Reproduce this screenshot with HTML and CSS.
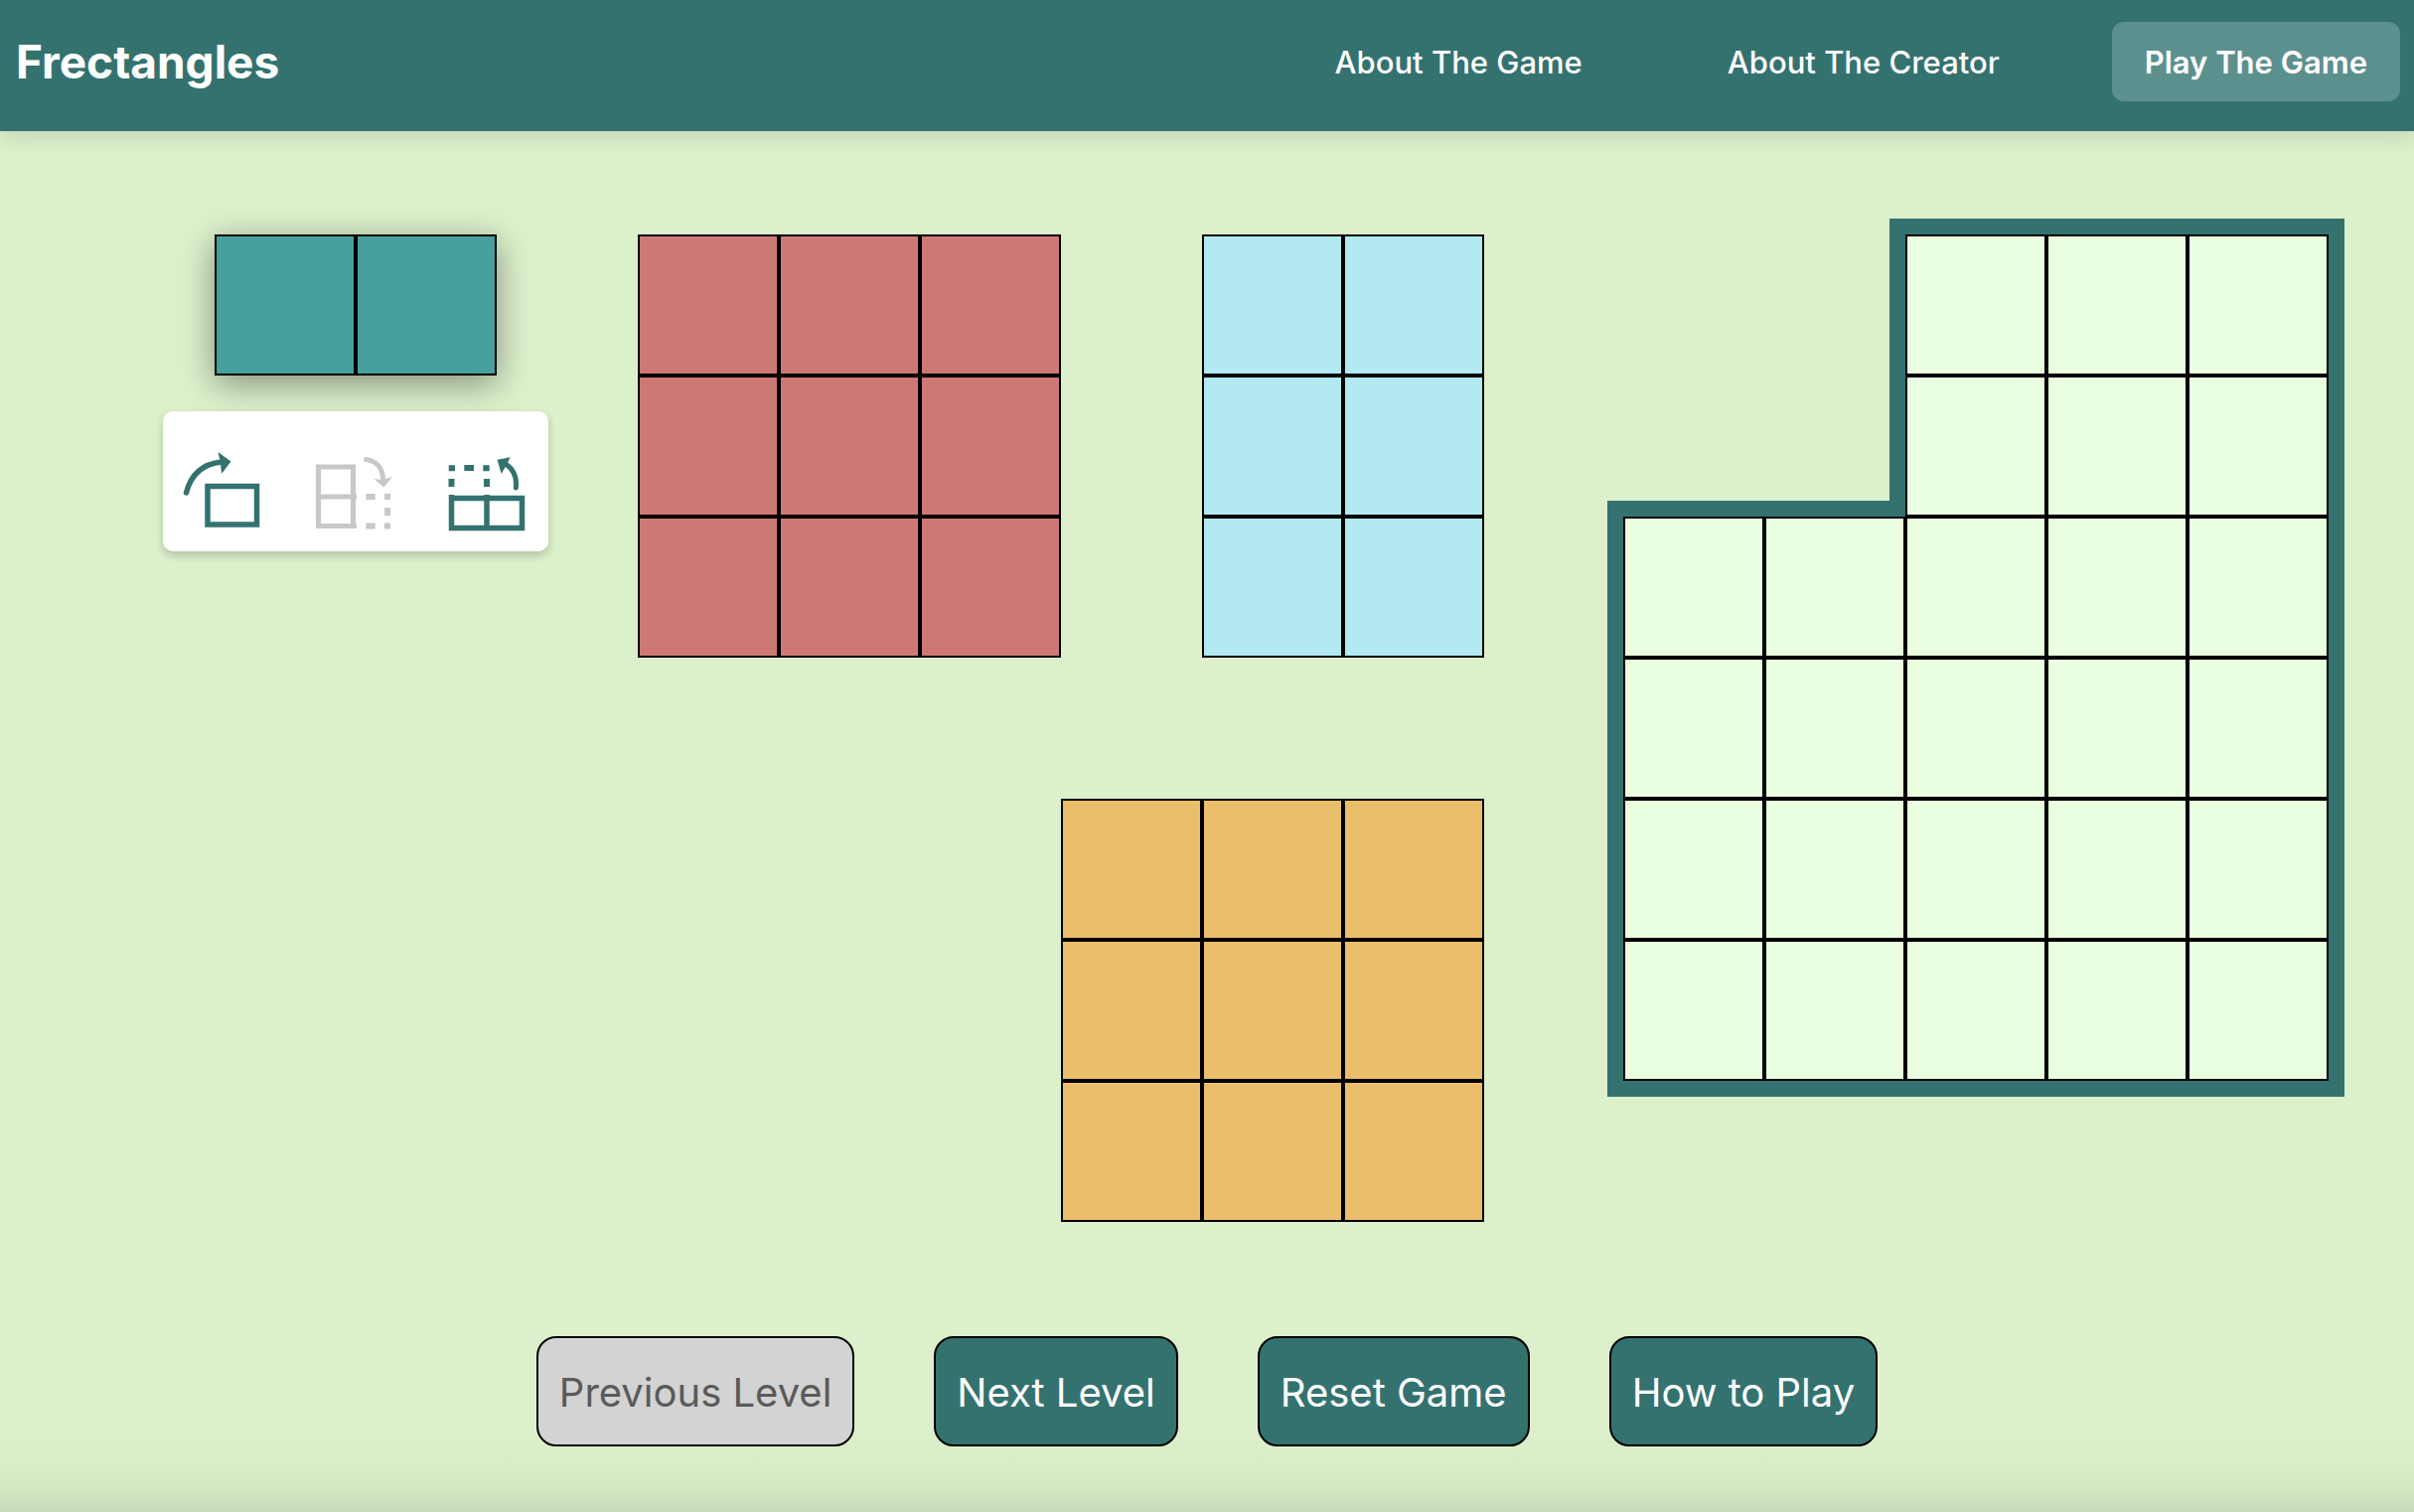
FILE: index.html
```html
<!DOCTYPE html>
<html lang="en">
<head>
<meta charset="utf-8">
<meta name="viewport" content="width=device-width, initial-scale=1">
<title>Frectangles</title>
<link rel="stylesheet" href="styles.css">
</head>
<body>
<header class="site-header">
  <h1 class="brand">Frectangles</h1>
  <nav class="site-nav">
    <a class="nav-link" href="#about-game">About The Game</a>
    <a class="nav-link" href="#about-creator">About The Creator</a>
    <a class="nav-link nav-link-active" href="#play" aria-current="page">Play The Game</a>
  </nav>
</header>
<main class="game">
  <div class="playfield">
    <div class="pieces">
      <div class="piece piece-teal">
        <i class="cell"></i><i class="cell"></i>
        <div class="toolbar">
          <button class="tool" type="button" aria-label="Rotate">
            <svg class="tool-icon" viewBox="0 0 84 84" fill="none" stroke="currentColor">
              <path d="M6.500 41C11 23 23 12 42 10" stroke-width="5.500" stroke-linecap="round"/>
              <path d="M38.500 0L51.500 9.500L42 22L41 11Z" fill="currentColor" stroke="none"/>
              <rect x="28" y="34.500" width="49.500" height="38.500" stroke-width="5.500"/>
            </svg>
          </button>
          <button class="tool" type="button" aria-label="Fold down" disabled>
            <svg class="tool-icon" viewBox="0 0 84 84" fill="none" stroke="currentColor">
              <path d="M6.500 15H41.500V74.500H6.500ZM6.500 45H45M41 74.500H45" stroke-width="5.200"/>
              <path d="M54.300 45H63.700M54.300 74.500H63.700M73 45H79M73 74.500H79M76 56V64" stroke-width="6"/>
              <path d="M54.500 7.500C65 9 71 16 71.500 27" stroke-width="5" stroke-linecap="round"/>
              <path d="M62.300 27L71 28L81 25L72.300 35.500Z" fill="currentColor" stroke="none"/>
            </svg>
          </button>
          <button class="tool" type="button" aria-label="Fold up">
            <svg class="tool-icon" viewBox="0 0 84 84" fill="none" stroke="currentColor">
              <path d="M7.500 46.500H78.500V76.500H7.500ZM43 43V76.500M7.500 43V46" stroke-width="5.500"/>
              <path d="M4.700 16.300H11M20.300 16H30M39.300 16.300H45.700M7.500 27V35M43 27V35" stroke-width="6"/>
              <path d="M72.300 36C73.500 25 69 16 60 11" stroke-width="5" stroke-linecap="round"/>
              <path d="M53.500 7.700L66.700 5.300L63 12.700L57.700 22Z" fill="currentColor" stroke="none"/>
            </svg>
          </button>
        </div>
      </div>
      <div class="piece piece-red">
        <i class="cell"></i><i class="cell"></i><i class="cell"></i>
        <i class="cell"></i><i class="cell"></i><i class="cell"></i>
        <i class="cell"></i><i class="cell"></i><i class="cell"></i>
      </div>
      <div class="piece piece-blue">
        <i class="cell"></i><i class="cell"></i>
        <i class="cell"></i><i class="cell"></i>
        <i class="cell"></i><i class="cell"></i>
      </div>
      <div class="piece piece-orange">
        <i class="cell"></i><i class="cell"></i><i class="cell"></i>
        <i class="cell"></i><i class="cell"></i><i class="cell"></i>
        <i class="cell"></i><i class="cell"></i><i class="cell"></i>
      </div>
    </div>
    <div class="board">
      <div class="board-part board-tall">
        <i class="cell"></i><i class="cell"></i><i class="cell"></i>
        <i class="cell"></i><i class="cell"></i><i class="cell"></i>
      </div>
      <div class="board-part board-wide">
        <i class="cell"></i><i class="cell"></i><i class="cell"></i><i class="cell"></i><i class="cell"></i>
        <i class="cell"></i><i class="cell"></i><i class="cell"></i><i class="cell"></i><i class="cell"></i>
        <i class="cell"></i><i class="cell"></i><i class="cell"></i><i class="cell"></i><i class="cell"></i>
        <i class="cell"></i><i class="cell"></i><i class="cell"></i><i class="cell"></i><i class="cell"></i>
      </div>
    </div>
  </div>
  <div class="controls">
    <button class="control" type="button" disabled>Previous Level</button>
    <button class="control" type="button">Next Level</button>
    <button class="control" type="button">Reset Game</button>
    <button class="control" type="button">How to Play</button>
  </div>
</main>
</body>
</html>
```
FILE: styles.css
```css
:root {
  --cell: 142px;
  --teal: #347270;
  --page: #dcf0cb;
}

* {
  box-sizing: border-box;
}

body {
  margin: 0;
  min-height: 100vh;
  display: flex;
  flex-direction: column;
  background: var(--page);
  font-family: Inter, "Liberation Sans", sans-serif;
}

.site-header {
  position: relative;
  display: flex;
  align-items: center;
  justify-content: space-between;
  padding: 22px 14px 30px 16px;
  background: var(--teal);
  color: #fff;
  box-shadow: 0 4px 24px rgba(0, 0, 0, 0.12);
}

.brand {
  margin: 0;
  font-size: 46px;
  line-height: 56px;
  font-weight: 700;
}

.site-nav {
  display: flex;
  gap: 80px;
}

.nav-link {
  padding: 21px 33px 19px;
  border-radius: 12px;
  color: #fff;
  font-size: 31px;
  line-height: 40px;
  font-weight: 500;
  text-decoration: none;
}

.nav-link-active {
  background: #5c908e;
  font-weight: 600;
}

.game {
  flex: 1;
  padding-top: 104px;
  background: linear-gradient(to top, #c8dab8, #d2e5c1 20px, #d9ecc7 44px, var(--page) 84px);
}

.playfield {
  display: flex;
  justify-content: space-between;
  padding: 0 86px 0 216px;
}

.pieces {
  display: grid;
  grid-template-columns: repeat(9, var(--cell));
  grid-template-rows: repeat(7, var(--cell));
}

.piece,
.board-part {
  display: grid;
  grid-auto-rows: var(--cell);
  grid-template-columns: repeat(auto-fill, var(--cell));
}

.cell {
  border: 2px solid #000;
}

.piece .cell {
  background: var(--fill);
}

.piece-teal {
  --fill: #48a09e;
  position: relative;
  grid-area: 1 / 1 / 2 / 3;
  box-shadow: 0 8px 32px rgba(0, 0, 0, 0.4);
}

.piece-red {
  --fill: #ce7875;
  grid-area: 1 / 4 / 4 / 7;
}

.piece-blue {
  --fill: #b3eaf2;
  grid-area: 1 / 8 / 4 / 10;
}

.piece-orange {
  --fill: #ebbe6b;
  grid-area: 5 / 7 / 8 / 10;
}

.toolbar {
  position: absolute;
  top: 178px;
  left: 50%;
  transform: translateX(-50%);
  display: flex;
  gap: 49px;
  padding: 41px 21px 16px 17px;
  border-radius: 10px;
  background: #fff;
  box-shadow: 0 4px 8px rgba(0, 0, 0, 0.2);
}

.tool {
  display: block;
  padding: 0;
  border: 0;
  background: none;
  color: var(--teal);
}

.tool:disabled {
  color: #c8c8c8;
}

.tool-icon {
  display: block;
  width: 84px;
  height: 84px;
}

.board {
  display: grid;
  grid-template-columns: repeat(5, var(--cell));
  grid-template-rows: repeat(6, var(--cell));
}

.board-part {
  box-shadow: 0 0 0 16px var(--teal);
}

.board-part .cell {
  background: #eafee0;
}

.board-tall {
  grid-area: 1 / 3 / 3 / 6;
  z-index: 1;
  clip-path: inset(-16px -16px 0 -16px);
}

.board-wide {
  grid-area: 3 / 1 / 7 / 6;
}

.controls {
  display: flex;
  justify-content: center;
  gap: 80px;
  padding: 115px 16px 66px;
}

.control {
  padding: 28px 21px 26px;
  border: 2px solid #000;
  border-radius: 20px;
  background: var(--teal);
  color: #fff;
  font-family: inherit;
  font-size: 40px;
  line-height: 53px;
}

.control:disabled {
  background: #d3d3d3;
  color: #5a5a5a;
}
```
